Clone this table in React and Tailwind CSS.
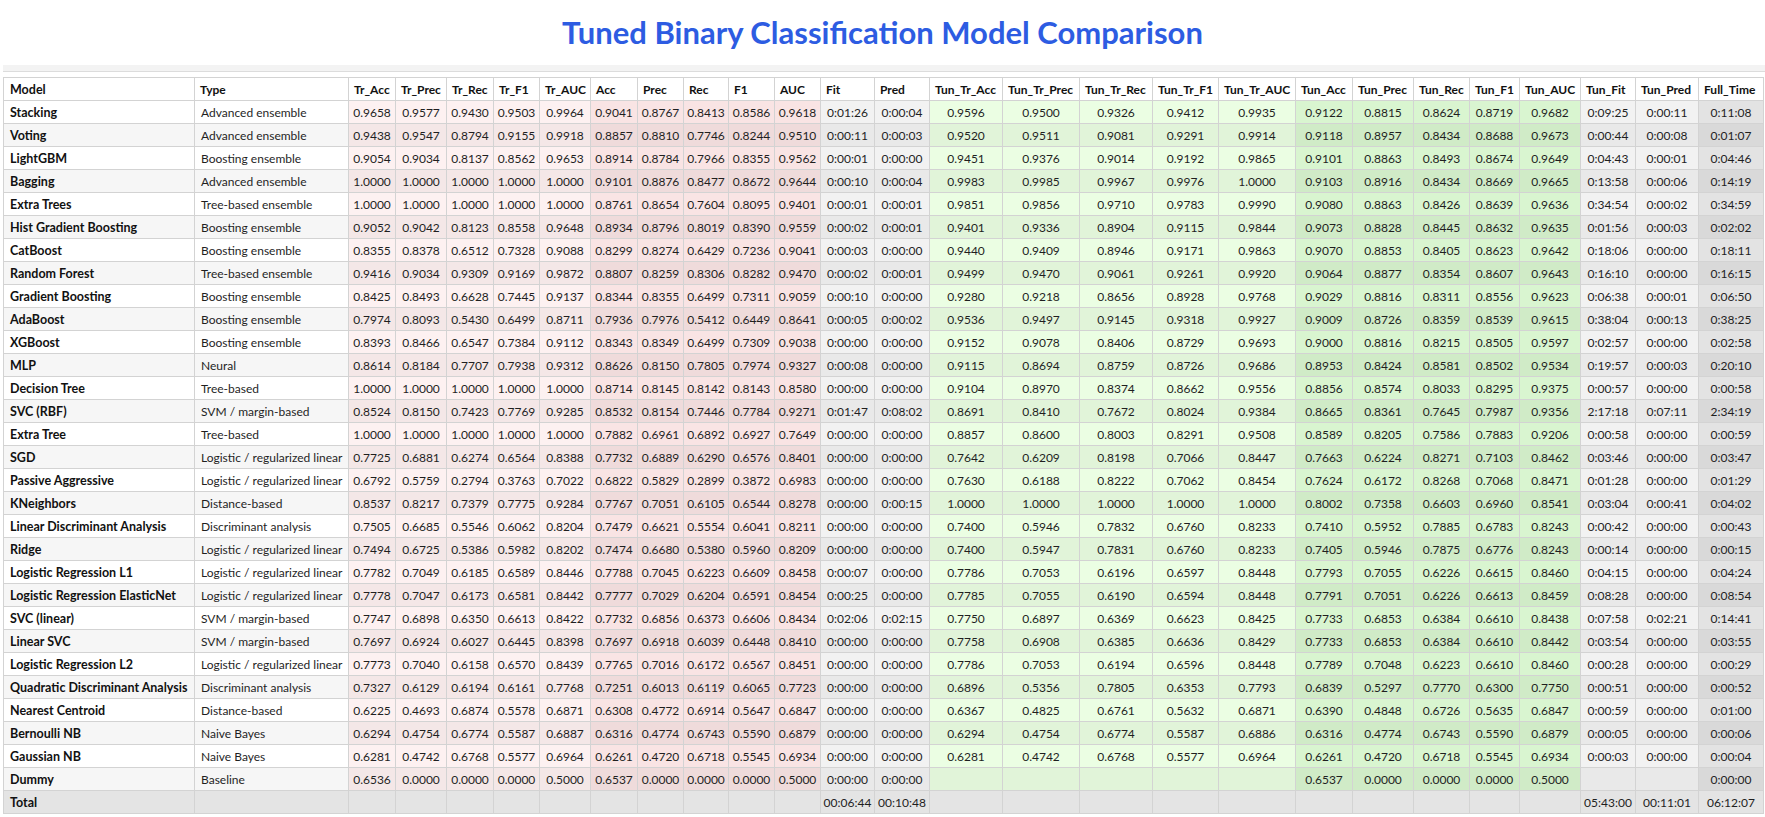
import React from 'react';

const COLUMNS = [
  'Model', 'Type', 'Tr_Acc', 'Tr_Prec', 'Tr_Rec', 'Tr_F1', 'Tr_AUC', 'Acc', 'Prec', 'Rec', 'F1', 'AUC',
  'Fit', 'Pred', 'Tun_Tr_Acc', 'Tun_Tr_Prec', 'Tun_Tr_Rec', 'Tun_Tr_F1', 'Tun_Tr_AUC', 'Tun_Acc',
  'Tun_Prec', 'Tun_Rec', 'Tun_F1', 'Tun_AUC', 'Tun_Fit', 'Tun_Pred', 'Full_Time',
];

const WIDTHS = [
  'w-[191px]', 'w-[154px]', 'w-[47px]', 'w-[51px]', 'w-[47px]', 'w-[46px]', 'w-[51px]', 'w-[47px]', 'w-[46px]',
  'w-[45px]', 'w-[46px]', 'w-[46px]', 'w-[54px]', 'w-[55px]', 'w-[73px]', 'w-[77px]', 'w-[73px]', 'w-[66px]',
  'w-[77px]', 'w-[57px]', 'w-[61px]', 'w-[56px]', 'w-[50px]', 'w-[61px]', 'w-[55px]', 'w-[63px]', 'w-[65px]',
];

// [odd row, even row] background per column group
const TONES = {
  name: ['bg-white', 'bg-[#f6f6f6]'],
  tr: ['bg-[#fdf1f1]', 'bg-[#f4e7e7]'],
  te: ['bg-[#f9e4e4]', 'bg-[#efdbdb]'],
  time: ['bg-[#f2f2f2]', 'bg-[#e9e9e9]'],
  ttr: ['bg-[#ebfee3]', 'bg-[#e1f4d9]'],
  tun: ['bg-[#d9f5d0]', 'bg-[#d0ebc7]'],
  full: ['bg-[#e3e3e3]', 'bg-[#d9d9d9]'],
};

const groupOf = (i) => {
  if (i < 2) return 'name';
  if (i < 7) return 'tr';
  if (i < 12) return 'te';
  if (i < 14) return 'time';
  if (i < 19) return 'ttr';
  if (i < 24) return 'tun';
  if (i < 26) return 'time';
  return 'full';
};

const row = (s) => s.split('|').map((c) => c.trim());

const ROWS = [
  'Stacking|Advanced ensemble|0.9658|0.9577|0.9430|0.9503|0.9964|0.9041|0.8767|0.8413|0.8586|0.9618|0:01:26|0:00:04|0.9596|0.9500|0.9326|0.9412|0.9935|0.9122|0.8815|0.8624|0.8719|0.9682|0:09:25|0:00:11|0:11:08',
  'Voting|Advanced ensemble|0.9438|0.9547|0.8794|0.9155|0.9918|0.8857|0.8810|0.7746|0.8244|0.9510|0:00:11|0:00:03|0.9520|0.9511|0.9081|0.9291|0.9914|0.9118|0.8957|0.8434|0.8688|0.9673|0:00:44|0:00:08|0:01:07',
  'LightGBM|Boosting ensemble|0.9054|0.9034|0.8137|0.8562|0.9653|0.8914|0.8784|0.7966|0.8355|0.9562|0:00:01|0:00:00|0.9451|0.9376|0.9014|0.9192|0.9865|0.9101|0.8863|0.8493|0.8674|0.9649|0:04:43|0:00:01|0:04:46',
  'Bagging|Advanced ensemble|1.0000|1.0000|1.0000|1.0000|1.0000|0.9101|0.8876|0.8477|0.8672|0.9644|0:00:10|0:00:04|0.9983|0.9985|0.9967|0.9976|1.0000|0.9103|0.8916|0.8434|0.8669|0.9665|0:13:58|0:00:06|0:14:19',
  'Extra Trees|Tree-based ensemble|1.0000|1.0000|1.0000|1.0000|1.0000|0.8761|0.8654|0.7604|0.8095|0.9401|0:00:01|0:00:01|0.9851|0.9856|0.9710|0.9783|0.9990|0.9080|0.8863|0.8426|0.8639|0.9636|0:34:54|0:00:02|0:34:59',
  'Hist Gradient Boosting|Boosting ensemble|0.9052|0.9042|0.8123|0.8558|0.9648|0.8934|0.8796|0.8019|0.8390|0.9559|0:00:02|0:00:01|0.9401|0.9336|0.8904|0.9115|0.9844|0.9073|0.8828|0.8445|0.8632|0.9635|0:01:56|0:00:03|0:02:02',
  'CatBoost|Boosting ensemble|0.8355|0.8378|0.6512|0.7328|0.9088|0.8299|0.8274|0.6429|0.7236|0.9041|0:00:03|0:00:00|0.9440|0.9409|0.8946|0.9171|0.9863|0.9070|0.8853|0.8405|0.8623|0.9642|0:18:06|0:00:00|0:18:11',
  'Random Forest|Tree-based ensemble|0.9416|0.9034|0.9309|0.9169|0.9872|0.8807|0.8259|0.8306|0.8282|0.9470|0:00:02|0:00:01|0.9499|0.9470|0.9061|0.9261|0.9920|0.9064|0.8877|0.8354|0.8607|0.9643|0:16:10|0:00:00|0:16:15',
  'Gradient Boosting|Boosting ensemble|0.8425|0.8493|0.6628|0.7445|0.9137|0.8344|0.8355|0.6499|0.7311|0.9059|0:00:10|0:00:00|0.9280|0.9218|0.8656|0.8928|0.9768|0.9029|0.8816|0.8311|0.8556|0.9623|0:06:38|0:00:01|0:06:50',
  'AdaBoost|Boosting ensemble|0.7974|0.8093|0.5430|0.6499|0.8711|0.7936|0.7976|0.5412|0.6449|0.8641|0:00:05|0:00:02|0.9536|0.9497|0.9145|0.9318|0.9927|0.9009|0.8726|0.8359|0.8539|0.9615|0:38:04|0:00:13|0:38:25',
  'XGBoost|Boosting ensemble|0.8393|0.8466|0.6547|0.7384|0.9112|0.8343|0.8349|0.6499|0.7309|0.9038|0:00:00|0:00:00|0.9152|0.9078|0.8406|0.8729|0.9693|0.9000|0.8816|0.8215|0.8505|0.9597|0:02:57|0:00:00|0:02:58',
  'MLP|Neural|0.8614|0.8184|0.7707|0.7938|0.9312|0.8626|0.8150|0.7805|0.7974|0.9327|0:00:08|0:00:00|0.9115|0.8694|0.8759|0.8726|0.9686|0.8953|0.8424|0.8581|0.8502|0.9534|0:19:57|0:00:03|0:20:10',
  'Decision Tree|Tree-based|1.0000|1.0000|1.0000|1.0000|1.0000|0.8714|0.8145|0.8142|0.8143|0.8580|0:00:00|0:00:00|0.9104|0.8970|0.8374|0.8662|0.9556|0.8856|0.8574|0.8033|0.8295|0.9375|0:00:57|0:00:00|0:00:58',
  'SVC (RBF)|SVM / margin-based|0.8524|0.8150|0.7423|0.7769|0.9285|0.8532|0.8154|0.7446|0.7784|0.9271|0:01:47|0:08:02|0.8691|0.8410|0.7672|0.8024|0.9384|0.8665|0.8361|0.7645|0.7987|0.9356|2:17:18|0:07:11|2:34:19',
  'Extra Tree|Tree-based|1.0000|1.0000|1.0000|1.0000|1.0000|0.7882|0.6961|0.6892|0.6927|0.7649|0:00:00|0:00:00|0.8857|0.8600|0.8003|0.8291|0.9508|0.8589|0.8205|0.7586|0.7883|0.9206|0:00:58|0:00:00|0:00:59',
  'SGD|Logistic / regularized linear|0.7725|0.6881|0.6274|0.6564|0.8388|0.7732|0.6889|0.6290|0.6576|0.8401|0:00:00|0:00:00|0.7642|0.6209|0.8198|0.7066|0.8447|0.7663|0.6224|0.8271|0.7103|0.8462|0:03:46|0:00:00|0:03:47',
  'Passive Aggressive|Logistic / regularized linear|0.6792|0.5759|0.2794|0.3763|0.7022|0.6822|0.5829|0.2899|0.3872|0.6983|0:00:00|0:00:00|0.7630|0.6188|0.8222|0.7062|0.8454|0.7624|0.6172|0.8268|0.7068|0.8471|0:01:28|0:00:00|0:01:29',
  'KNeighbors|Distance-based|0.8537|0.8217|0.7379|0.7775|0.9284|0.7767|0.7051|0.6105|0.6544|0.8278|0:00:00|0:00:15|1.0000|1.0000|1.0000|1.0000|1.0000|0.8002|0.7358|0.6603|0.6960|0.8541|0:03:04|0:00:41|0:04:02',
  'Linear Discriminant Analysis|Discriminant analysis|0.7505|0.6685|0.5546|0.6062|0.8204|0.7479|0.6621|0.5554|0.6041|0.8211|0:00:00|0:00:00|0.7400|0.5946|0.7832|0.6760|0.8233|0.7410|0.5952|0.7885|0.6783|0.8243|0:00:42|0:00:00|0:00:43',
  'Ridge|Logistic / regularized linear|0.7494|0.6725|0.5386|0.5982|0.8202|0.7474|0.6680|0.5380|0.5960|0.8209|0:00:00|0:00:00|0.7400|0.5947|0.7831|0.6760|0.8233|0.7405|0.5946|0.7875|0.6776|0.8243|0:00:14|0:00:00|0:00:15',
  'Logistic Regression L1|Logistic / regularized linear|0.7782|0.7049|0.6185|0.6589|0.8446|0.7788|0.7045|0.6223|0.6609|0.8458|0:00:07|0:00:00|0.7786|0.7053|0.6196|0.6597|0.8448|0.7793|0.7055|0.6226|0.6615|0.8460|0:04:15|0:00:00|0:04:24',
  'Logistic Regression ElasticNet|Logistic / regularized linear|0.7778|0.7047|0.6173|0.6581|0.8442|0.7777|0.7029|0.6204|0.6591|0.8454|0:00:25|0:00:00|0.7785|0.7055|0.6190|0.6594|0.8448|0.7791|0.7051|0.6226|0.6613|0.8459|0:08:28|0:00:00|0:08:54',
  'SVC (linear)|SVM / margin-based|0.7747|0.6898|0.6350|0.6613|0.8422|0.7732|0.6856|0.6373|0.6606|0.8434|0:02:06|0:02:15|0.7750|0.6897|0.6369|0.6623|0.8425|0.7733|0.6853|0.6384|0.6610|0.8438|0:07:58|0:02:21|0:14:41',
  'Linear SVC|SVM / margin-based|0.7697|0.6924|0.6027|0.6445|0.8398|0.7697|0.6918|0.6039|0.6448|0.8410|0:00:00|0:00:00|0.7758|0.6908|0.6385|0.6636|0.8429|0.7733|0.6853|0.6384|0.6610|0.8442|0:03:54|0:00:00|0:03:55',
  'Logistic Regression L2|Logistic / regularized linear|0.7773|0.7040|0.6158|0.6570|0.8439|0.7765|0.7016|0.6172|0.6567|0.8451|0:00:00|0:00:00|0.7786|0.7053|0.6194|0.6596|0.8448|0.7789|0.7048|0.6223|0.6610|0.8460|0:00:28|0:00:00|0:00:29',
  'Quadratic Discriminant Analysis|Discriminant analysis|0.7327|0.6129|0.6194|0.6161|0.7768|0.7251|0.6013|0.6119|0.6065|0.7723|0:00:00|0:00:00|0.6896|0.5356|0.7805|0.6353|0.7793|0.6839|0.5297|0.7770|0.6300|0.7750|0:00:51|0:00:00|0:00:52',
  'Nearest Centroid|Distance-based|0.6225|0.4693|0.6874|0.5578|0.6871|0.6308|0.4772|0.6914|0.5647|0.6847|0:00:00|0:00:00|0.6367|0.4825|0.6761|0.5632|0.6871|0.6390|0.4848|0.6726|0.5635|0.6847|0:00:59|0:00:00|0:01:00',
  'Bernoulli NB|Naive Bayes|0.6294|0.4754|0.6774|0.5587|0.6887|0.6316|0.4774|0.6743|0.5590|0.6879|0:00:00|0:00:00|0.6294|0.4754|0.6774|0.5587|0.6886|0.6316|0.4774|0.6743|0.5590|0.6879|0:00:05|0:00:00|0:00:06',
  'Gaussian NB|Naive Bayes|0.6281|0.4742|0.6768|0.5577|0.6964|0.6261|0.4720|0.6718|0.5545|0.6934|0:00:00|0:00:00|0.6281|0.4742|0.6768|0.5577|0.6964|0.6261|0.4720|0.6718|0.5545|0.6934|0:00:03|0:00:00|0:00:04',
  'Dummy|Baseline|0.6536|0.0000|0.0000|0.0000|0.5000|0.6537|0.0000|0.0000|0.0000|0.5000|0:00:00|0:00:00||||||0.6537|0.0000|0.0000|0.0000|0.5000|||0:00:00',
].map(row);

const TOTAL = row('Total||||||||||||00:06:44|00:10:48|||||||||||05:43:00|00:11:01|06:12:07');

const base = 'h-[23px] border border-[#d3d3d3] py-0 leading-[21px] whitespace-nowrap';
const align = (ci) =>
  ci === 0
    ? 'px-[6px] text-left text-[12.5px] font-bold text-[#111]'
    : ci === 1
      ? 'px-[6px] text-left'
      : 'px-[2px] text-center';

export default function App() {
  return (
    <div className="min-h-screen bg-white font-['Lato',sans-serif] text-[12px] text-[#1f1f1f]">
      <h1 className="flex h-[65px] items-center justify-center text-[31px] font-bold text-[#2d5ce2]">
        Tuned Binary Classification Model Comparison
      </h1>
      <div className="pl-[3px]">
        <div className="h-[7px] border-b border-[#dcdcdc] bg-[#f3f3f3]" />
        <table className="mt-[5px] w-[1760px] table-fixed border-collapse">
          <colgroup>
            {WIDTHS.map((w, i) => (
              <col key={i} className={w} />
            ))}
          </colgroup>
          <thead>
            <tr>
              {COLUMNS.map((c, ci) => (
                <th
                  key={c}
                  className={`${base} bg-white text-left font-bold text-[#111] ${
                    ci === 0 ? 'px-[6px] text-[12.5px]' : 'px-[5px]'
                  }`}
                >
                  {c}
                </th>
              ))}
            </tr>
          </thead>
          <tbody>
            {ROWS.map((r, ri) => (
              <tr key={r[0]}>
                {r.map((v, ci) => (
                  <td key={ci} className={`${base} ${TONES[groupOf(ci)][ri % 2]} ${align(ci)}`}>
                    {v}
                  </td>
                ))}
              </tr>
            ))}
            <tr>
              {TOTAL.map((v, ci) => (
                <td key={ci} className={`${base} bg-[#e4e4e4] ${align(ci)}`}>
                  {v}
                </td>
              ))}
            </tr>
          </tbody>
        </table>
      </div>
    </div>
  );
}
